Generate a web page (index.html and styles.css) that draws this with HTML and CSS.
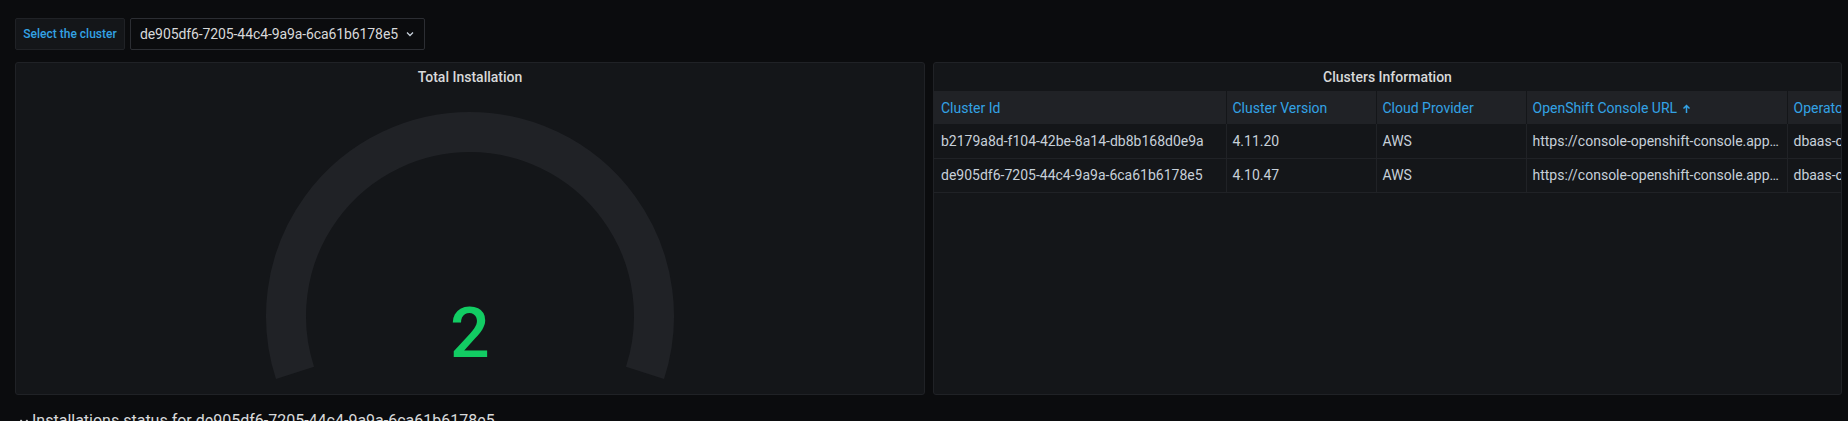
FILE: index.html
```html
<!DOCTYPE html>
<html>
<head>
<meta charset="utf-8">
<link rel="stylesheet" href="styles.css">
</head>
<body>
<div class="page">
  <div class="toolbar">
    <div class="var-label">Select the cluster</div>
    <div class="var-select">
      <span>de905df6-7205-44c4-9a9a-6ca61b6178e5</span>
      <svg class="chev" width="8" height="6" viewBox="0 0 8 6"><path d="M1 1.5 L4 4.5 L7 1.5" fill="none" stroke="#c7d0d9" stroke-width="1.3"/></svg>
    </div>
  </div>
  <div class="panels">
    <div class="panel">
      <div class="panel-title">Total Installation</div>
      <div class="panel-body gauge-body">
        <svg class="gauge" width="908" height="303" viewBox="0 0 908 303">
          <path d="M 279 281.9 A 184 184 0 1 1 629 281.9" fill="none" stroke="#202226" stroke-width="40"/>
          <text x="454" y="266" text-anchor="middle" class="gauge-val">2</text>
        </svg>
      </div>
    </div>
    <div class="panel">
      <div class="panel-title">Clusters Information</div>
      <div class="panel-body table-wrap">
        <table class="tbl">
          <colgroup>
            <col style="width:292px"><col style="width:150px"><col style="width:150px"><col style="width:261px"><col style="width:200px">
          </colgroup>
          <thead>
            <tr>
              <th>Cluster Id</th>
              <th>Cluster Version</th>
              <th>Cloud Provider</th>
              <th>OpenShift Console URL <svg class="arrow" width="9" height="10" viewBox="0 0 9 10"><path d="M4.5 9 V2 M1.5 4.5 L4.5 1.5 L7.5 4.5" fill="none" stroke="#33a2e5" stroke-width="1.5"/></svg></th>
              <th>Operator Version</th>
            </tr>
          </thead>
          <tbody>
            <tr>
              <td>b2179a8d-f104-42be-8a14-db8b168d0e9a</td>
              <td>4.11.20</td>
              <td>AWS</td>
              <td>https://console-openshift-console.apps.example.com</td>
              <td>dbaas-operator.v0.4.0</td>
            </tr>
            <tr>
              <td>de905df6-7205-44c4-9a9a-6ca61b6178e5</td>
              <td>4.10.47</td>
              <td>AWS</td>
              <td>https://console-openshift-console.apps.example.com</td>
              <td>dbaas-operator.v0.4.0</td>
            </tr>
          </tbody>
        </table>
      </div>
    </div>
  </div>
  <div class="row-title">
    <svg class="row-chev" width="10" height="8" viewBox="0 0 10 8"><path d="M1.5 2 L5 5.5 L8.5 2" fill="none" stroke="#d8d9da" stroke-width="1.5"/></svg>
    <span>Installations status for de905df6-7205-44c4-9a9a-6ca61b6178e5</span>
  </div>
</div>
</body>
</html>
```

FILE: styles.css
```css
html, body {
  margin: 0;
  padding: 0;
  background: #0b0c0e;
  font-family: Roboto, "Liberation Sans", sans-serif;
  color: #c7d0d9;
  overflow: hidden;
}

.page {
  padding: 18px 6px 0 15px;
}

.toolbar {
  display: flex;
  gap: 5px;
  height: 32px;
}

.var-label {
  box-sizing: border-box;
  width: 110px;
  height: 32px;
  display: flex;
  align-items: center;
  justify-content: center;
  background: #141619;
  border: 1px solid #202226;
  border-radius: 2px;
  color: #33a2e5;
  font-size: 12px;
  font-weight: 500;
}

.var-select {
  box-sizing: border-box;
  width: 295px;
  height: 32px;
  display: flex;
  align-items: center;
  padding: 0 0 0 9px;
  background: #0b0c0e;
  border: 1px solid #2c2e33;
  border-radius: 2px;
  color: #d8d9da;
  font-size: 14px;
  letter-spacing: -0.1px;
}

.var-select .chev {
  margin-left: 8px;
}

.panels {
  margin-top: 12px;
  display: grid;
  grid-template-columns: 910px 909px;
  gap: 8px;
}

.panel {
  box-sizing: border-box;
  height: 333px;
  background: #141619;
  border: 1px solid #202226;
  border-radius: 3px;
  display: flex;
  flex-direction: column;
  overflow: hidden;
}

.panel-title {
  height: 28px;
  line-height: 28px;
  text-align: center;
  font-size: 14px;
  font-weight: 500;
  color: #d8d9da;
  flex: none;
}

.panel-body {
  flex: 1;
  overflow: hidden;
}

.gauge {
  display: block;
}

.gauge-val {
  font-family: Roboto, "Liberation Sans", sans-serif;
  font-size: 70px;
  font-weight: 500;
  fill: #12cc63;
}

.tbl {
  table-layout: fixed;
  border-collapse: collapse;
  width: 1053px;
  font-size: 14px;
}

.tbl th {
  height: 33px;
  box-sizing: border-box;
  background: #202226;
  color: #33a2e5;
  font-weight: 400;
  text-align: left;
  padding: 0 6px;
  border-right: 1px solid #141619;
  white-space: nowrap;
  overflow: hidden;
}

.tbl th:first-child,
.tbl td:first-child {
  padding-left: 7px;
}

.tbl .arrow {
  vertical-align: -1px;
  margin-left: 1px;
}

.tbl td {
  height: 34px;
  box-sizing: border-box;
  padding: 0 6px;
  color: #c7d0d9;
  border-right: 1px solid #202226;
  border-bottom: 1px solid #202226;
  white-space: nowrap;
  overflow: hidden;
  text-overflow: ellipsis;
}

.row-title {
  margin-top: 14px;
  margin-left: 4px;
  display: flex;
  align-items: center;
  gap: 3px;
  font-size: 16px;
  line-height: 24px;
  color: #d8d9da;
}

.row-chev {
  flex: none;
  margin-top: 2px;
}
```
